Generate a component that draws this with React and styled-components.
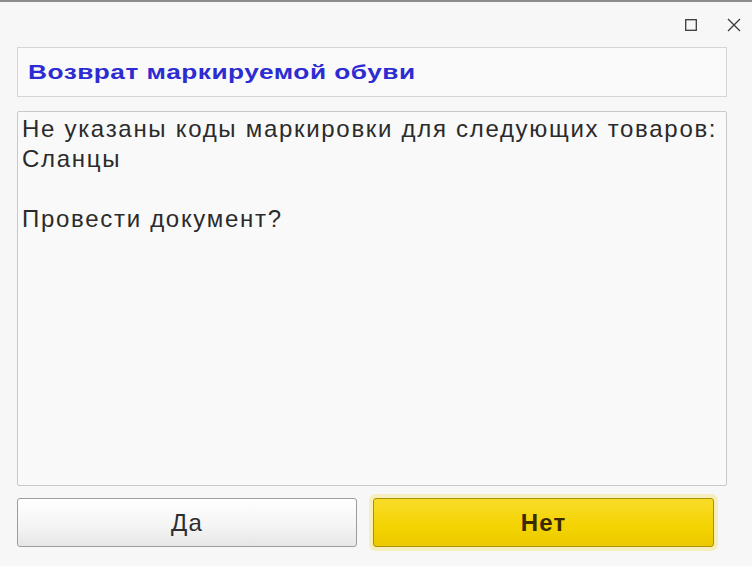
import React from "react";
import styled, { createGlobalStyle } from "styled-components";

const GlobalStyle = createGlobalStyle`
  html, body {
    margin: 0;
    padding: 0;
    background: #f7f7f7;
  }
  body {
    font-family: "Liberation Sans", Arial, sans-serif;
  }
`;

const Window = styled.div`
  width: 752px;
  height: 566px;
  box-sizing: border-box;
  border-top: 2px solid #8c8c8c;
  background: #f7f7f7;
  display: flex;
  flex-direction: column;
`;

const TitleBar = styled.div`
  height: 45px;
  display: flex;
  justify-content: flex-end;
  align-items: center;
  gap: 23px;
  padding: 0 8px 0 0;
`;

const WinButton = styled.button`
  width: 20px;
  height: 20px;
  padding: 0;
  border: none;
  background: transparent;
  display: flex;
  align-items: center;
  justify-content: center;
  color: #3a3a3a;
`;

const Body = styled.div`
  flex: 1;
  display: flex;
  flex-direction: column;
  padding: 0 25px 19px 17px;
`;

const Header = styled.div`
  height: 50px;
  box-sizing: border-box;
  border: 1px solid #d6d6d6;
  background: #fafafa;
  display: flex;
  align-items: center;
  padding: 0 0 1px 10px;
`;

/* the caption in the reference is drawn wide, so stretch it */
const HeaderText = styled.span`
  display: inline-block;
  font-size: 21px;
  font-weight: bold;
  color: #2c2cd2;
  letter-spacing: 0.4px;
  transform: scaleX(1.25);
  transform-origin: left center;
`;

const Message = styled.div`
  flex: 1;
  margin-top: 14px;
  box-sizing: border-box;
  border: 1px solid #c9c9c9;
  border-radius: 2px;
  background: #f9f9f9;
  padding: 2px 0 0 4px;
  font-size: 24px;
  line-height: 30px;
  color: #2b2b2b;
  letter-spacing: 1.7px;
  white-space: pre-line;
`;

const Buttons = styled.div`
  margin-top: 12px;
  display: grid;
  grid-template-columns: 340px 341px;
  gap: 16px;
`;

const Button = styled.button`
  height: 49px;
  box-sizing: border-box;
  border-radius: 3px;
  font-family: "Liberation Sans", Arial, sans-serif;
  font-size: 24px;
  letter-spacing: 1.2px;
  cursor: pointer;
  border: 1px solid ${(p) => (p.$primary ? "#a89200" : "#9d9d9d")};
  background: ${(p) =>
    p.$primary
      ? "linear-gradient(#f9dc2a, #f3d300 60%, #ecc900)"
      : "linear-gradient(#ffffff, #f4f4f4 60%, #e6e6e6)"};
  color: ${(p) => (p.$primary ? "#3b2a00" : "#2e2e2e")};
  font-weight: ${(p) => (p.$primary ? "bold" : "normal")};
  box-shadow: ${(p) =>
    p.$primary ? "0 0 0 4px rgba(246, 232, 150, 0.6)" : "none"};
`;

export default function App() {
  return (
    <>
      <GlobalStyle />
      <Window>
        <TitleBar>
          <WinButton aria-label="Развернуть">
            <svg width="12" height="12" viewBox="0 0 12 12">
              <rect x="0.7" y="0.7" width="10.6" height="10.6" fill="none" stroke="currentColor" strokeWidth="1.3" />
            </svg>
          </WinButton>
          <WinButton aria-label="Закрыть">
            <svg width="14" height="14" viewBox="0 0 14 14">
              <path d="M1 1 L13 13 M13 1 L1 13" stroke="currentColor" strokeWidth="1.3" fill="none" />
            </svg>
          </WinButton>
        </TitleBar>
        <Body>
          <Header>
            <HeaderText>Возврат маркируемой обуви</HeaderText>
          </Header>
          <Message>
            {"Не указаны коды маркировки для следующих товаров:\nСланцы\n\nПровести документ?"}
          </Message>
          <Buttons>
            <Button>Да</Button>
            <Button $primary>Нет</Button>
          </Buttons>
        </Body>
      </Window>
    </>
  );
}
